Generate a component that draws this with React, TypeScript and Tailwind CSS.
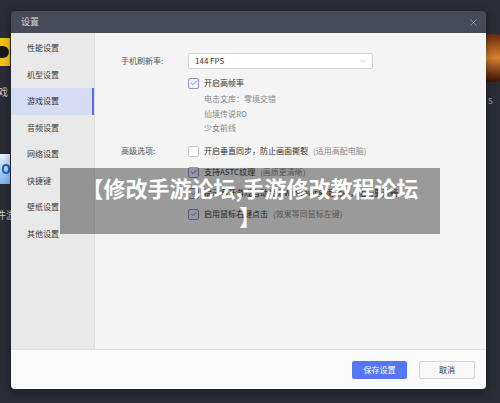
import { Check, ChevronDown, X } from "lucide-react"

const menu = ["性能设置", "机型设置", "游戏设置", "音频设置", "网络设置", "快捷键", "壁纸设置", "其他设置"]

const Box = ({ on }: { on: boolean }) => (
  <span
    className={`flex h-[11px] w-[11px] shrink-0 items-center justify-center rounded-[2px] border ${
      on ? "border-[#8e96c9] bg-[#eef0fb]" : "border-[#c9c9c9] bg-white"
    }`}
  >
    {on && <Check size={8} strokeWidth={2.2} className="text-[#5b67ad]" />}
  </span>
)

const Opt = ({ on, text, note }: { on: boolean; text: string; note?: string }) => (
  <div className="flex h-[21px] items-center gap-[5px]">
    <Box on={on} />
    <span className="text-[#333]">{text}</span>
    {note && <span className="text-[#888]">({note})</span>}
  </div>
)

export default function App() {
  return (
    <div className="relative h-[403px] w-[500px] overflow-hidden bg-[#2a2c36] font-['Noto_Sans_CJK_SC',sans-serif] text-[8px]">
      {/* launcher behind the dialog */}
      <div className="absolute left-[-20px] top-[38px] flex h-[28px] w-[30px] items-center justify-end bg-[#f2c21b]">
        <span className="mr-[1px] h-[12px] w-[14px] rounded-full bg-[#1a1a1a]" />
      </div>
      <div className="absolute left-[-12px] top-[84px] text-[10px] text-[#d0d0d0]">游戏</div>
      <div className="absolute left-[-20px] top-[154px] h-[30px] w-[30px] bg-gradient-to-b from-[#e8f1fb] to-[#7fb1ea]">
        <span className="absolute right-[0px] top-[10px] h-[10px] w-[8px] rounded-full border-[2px] border-[#2066c8]" />
      </div>
      <div className="absolute left-[-4px] top-[207px] text-[10px] text-[#d0d0d0]">件游</div>
      <div className="absolute left-[480px] top-[34px] h-[48px] w-[20px] rounded-[3px] bg-gradient-to-b from-[#6b2a10] via-[#d9822b] to-[#3a1408]" />
      <div className="absolute left-[488px] top-[92px] text-[10px] text-[#9a9a9a]">s</div>

      {/* dialog */}
      <div className="absolute left-[11px] top-[11px] flex h-[378px] w-[475px] flex-col overflow-hidden rounded-[4px] shadow-[0_2px_8px_rgba(0,0,0,0.4)]">
        <div className="flex h-[22px] shrink-0 items-center justify-between bg-[#474a57] pl-[10px] pr-[7px]">
          <span className="text-[9px] text-[#d6d6d6]">设置</span>
          <X size={11} strokeWidth={1.3} className="text-[#c9c9cf]" />
        </div>

        <div className="flex min-h-0 flex-1">
          <div className="flex w-[84px] shrink-0 flex-col border-r border-[#dedede] bg-[#e9e9e9] pt-[2px]">
            {menu.map((m) => (
              <div
                key={m}
                className={`flex h-[26.5px] items-center pl-[16px] ${
                  m === "游戏设置" ? "border-r-2 border-[#4f6ef0] bg-[#d7dcf5] text-[#333]" : "text-[#3a3a3a]"
                }`}
              >
                {m}
              </div>
            ))}
          </div>

          <div className="flex-1 bg-[#f4f4f4] pl-[26px] pt-[20px] text-[#333]">
            <div className="flex">
              <div className="flex h-[16px] w-[67px] items-center text-[#555]">手机刷新率:</div>
              <div className="flex flex-col">
                <div className="flex h-[16px] w-[185px] items-center justify-between rounded-[2px] border border-[#d3d3d3] bg-white pl-[6px] pr-[4px]">
                  <span className="text-[#333]">144 FPS</span>
                  <ChevronDown size={10} strokeWidth={1.2} className="text-[#a0a0a0]" />
                </div>
                <div className="mt-[7px] flex h-[14px] items-center gap-[5px]">
                  <Box on={true} />
                  <span>开启高帧率</span>
                </div>
                <div className="mt-[2px] flex flex-col pl-[16px] text-[#888]">
                  <div className="flex h-[14.5px] items-center">电击文库：零境交错</div>
                  <div className="flex h-[14.5px] items-center">仙境传说RO</div>
                  <div className="flex h-[14.5px] items-center">少女前线</div>
                </div>
              </div>
            </div>

            <div className="mt-[5px] flex">
              <div className="flex h-[21px] w-[67px] items-center text-[#555]">高级选项:</div>
              <div className="flex flex-col">
                <Opt on={false} text="开启垂直同步，防止画面撕裂" note="适用高配电脑" />
                <Opt on={true} text="支持ASTC纹理" note="画质更清晰" />
                <Opt on={true} text="提示多开游戏自动关闭Windows桌面动画，运行更流畅" />
                <Opt on={true} text="启用鼠标右键点击" note="效果等同鼠标左键" />
              </div>
            </div>
          </div>
        </div>

        <div className="flex h-[40px] shrink-0 items-center justify-end gap-[12px] border-t border-[#e3e3e3] bg-[#fafafa] pr-[11px]">
          <button className="h-[18px] w-[55px] rounded-[2px] bg-[#5577f7] text-[8px] text-white">保存设置</button>
          <button className="h-[18px] w-[56px] rounded-[2px] border border-[#d6d6d6] bg-[#f8f8fa] text-[8px] text-[#333]">取消</button>
        </div>
      </div>

      {/* watermark banner */}
      <div className="absolute left-[60px] top-[168px] h-[66px] w-[380px] bg-[rgba(0,0,0,0.37)] pt-[5px] text-center text-[22px] font-bold leading-[28px] text-white">
        【修改手游论坛,手游修改教程论坛
        <br />】
      </div>
    </div>
  )
}
